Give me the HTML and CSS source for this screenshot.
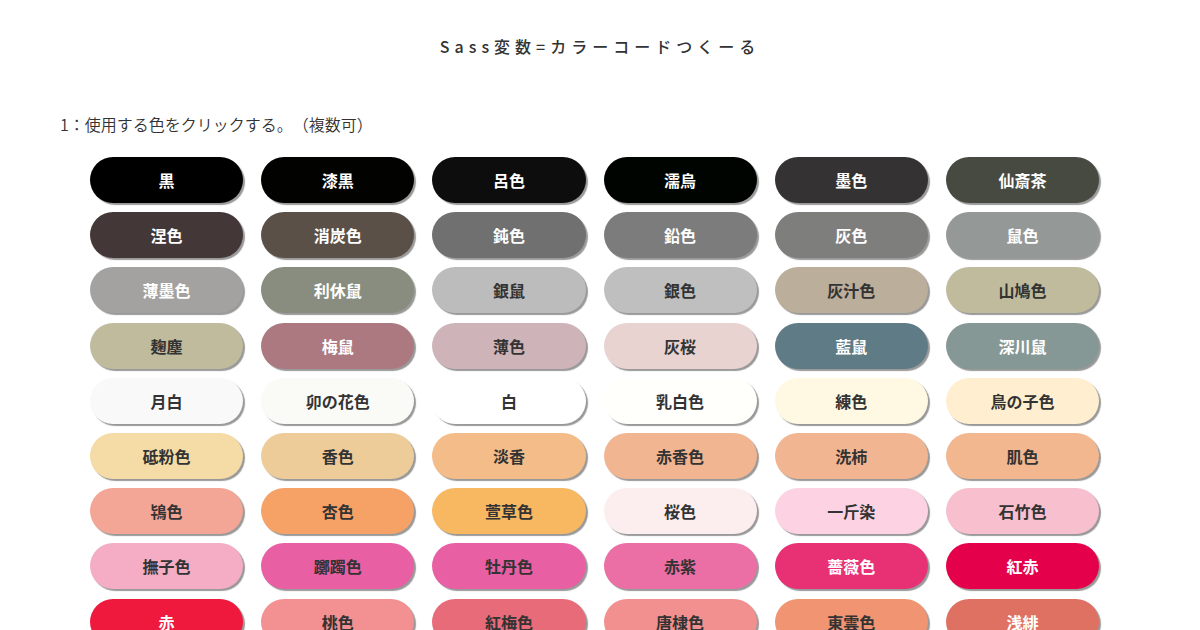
FILE: index.html
```
<!DOCTYPE html>
<html lang="ja">
<head>
<meta charset="utf-8">
<meta name="viewport" content="width=device-width, initial-scale=1">
<title>Sass変数=カラーコードつくーる</title>
<link rel="stylesheet" href="styles.css">
</head>
<body>
<header class="header"><h1 class="title">Sass変数=カラーコードつくーる</h1></header>
<main class="main">
<p class="step">1：使用する色をクリックする。（複数可）</p>
<ul class="colors">
<li><button type="button" class="color light" style="background-color:#000000">黒</button></li>
<li><button type="button" class="color light" style="background-color:#020200">漆黒</button></li>
<li><button type="button" class="color light" style="background-color:#0d0d0d">呂色</button></li>
<li><button type="button" class="color light" style="background-color:#000400">濡烏</button></li>
<li><button type="button" class="color light" style="background-color:#343232">墨色</button></li>
<li><button type="button" class="color light" style="background-color:#474a40">仙斎茶</button></li>
<li><button type="button" class="color light" style="background-color:#433737">涅色</button></li>
<li><button type="button" class="color light" style="background-color:#5a5047">消炭色</button></li>
<li><button type="button" class="color light" style="background-color:#707070">鈍色</button></li>
<li><button type="button" class="color light" style="background-color:#7c7c7c">鉛色</button></li>
<li><button type="button" class="color light" style="background-color:#7e7e7d">灰色</button></li>
<li><button type="button" class="color light" style="background-color:#949897">鼠色</button></li>
<li><button type="button" class="color light" style="background-color:#a3a2a1">薄墨色</button></li>
<li><button type="button" class="color light" style="background-color:#888d7f">利休鼠</button></li>
<li><button type="button" class="color" style="background-color:#bcbcbc">銀鼠</button></li>
<li><button type="button" class="color" style="background-color:#bfbfbf">銀色</button></li>
<li><button type="button" class="color" style="background-color:#bbae9b">灰汁色</button></li>
<li><button type="button" class="color" style="background-color:#bfbb9c">山鳩色</button></li>
<li><button type="button" class="color" style="background-color:#bfbb9c">麹塵</button></li>
<li><button type="button" class="color light" style="background-color:#ad7981">梅鼠</button></li>
<li><button type="button" class="color" style="background-color:#ceb4b9">薄色</button></li>
<li><button type="button" class="color" style="background-color:#e8d3d1">灰桜</button></li>
<li><button type="button" class="color light" style="background-color:#5f7b85">藍鼠</button></li>
<li><button type="button" class="color light" style="background-color:#869896">深川鼠</button></li>
<li><button type="button" class="color" style="background-color:#f9f9f9">月白</button></li>
<li><button type="button" class="color" style="background-color:#fafaf6">卯の花色</button></li>
<li><button type="button" class="color" style="background-color:#ffffff">白</button></li>
<li><button type="button" class="color" style="background-color:#fffffc">乳白色</button></li>
<li><button type="button" class="color" style="background-color:#fff9e3">練色</button></li>
<li><button type="button" class="color" style="background-color:#ffefd0">鳥の子色</button></li>
<li><button type="button" class="color" style="background-color:#f5dca6">砥粉色</button></li>
<li><button type="button" class="color" style="background-color:#eecc9a">香色</button></li>
<li><button type="button" class="color" style="background-color:#f3bc88">淡香</button></li>
<li><button type="button" class="color" style="background-color:#f2b592">赤香色</button></li>
<li><button type="button" class="color" style="background-color:#f2b591">洗柿</button></li>
<li><button type="button" class="color" style="background-color:#f2b78f">肌色</button></li>
<li><button type="button" class="color" style="background-color:#f3a696">鴇色</button></li>
<li><button type="button" class="color" style="background-color:#f6a266">杏色</button></li>
<li><button type="button" class="color" style="background-color:#f8b862">萱草色</button></li>
<li><button type="button" class="color" style="background-color:#fceeee">桜色</button></li>
<li><button type="button" class="color" style="background-color:#fdd3e3">一斤染</button></li>
<li><button type="button" class="color" style="background-color:#f8bfce">石竹色</button></li>
<li><button type="button" class="color" style="background-color:#f5adc6">撫子色</button></li>
<li><button type="button" class="color" style="background-color:#e95fa4">躑躅色</button></li>
<li><button type="button" class="color" style="background-color:#e95fa4">牡丹色</button></li>
<li><button type="button" class="color" style="background-color:#eb6ea5">赤紫</button></li>
<li><button type="button" class="color light" style="background-color:#e83075">薔薇色</button></li>
<li><button type="button" class="color light" style="background-color:#e5004b">紅赤</button></li>
<li><button type="button" class="color light" style="background-color:#ef193d">赤</button></li>
<li><button type="button" class="color" style="background-color:#f29092">桃色</button></li>
<li><button type="button" class="color" style="background-color:#e86b79">紅梅色</button></li>
<li><button type="button" class="color" style="background-color:#f29090">唐棣色</button></li>
<li><button type="button" class="color" style="background-color:#f19472">東雲色</button></li>
<li><button type="button" class="color light" style="background-color:#df7163">浅緋</button></li>
</ul>
</main>
</body>
</html>
```
FILE: styles.css
```
body {
  margin: 0;
  background: #fff;
  color: #333;
  font: 16px/24px "Noto Sans CJK JP", sans-serif;
  text-spacing-trim: space-all;
}

.header {
  padding: 34px 60px 0;
}

.title {
  margin: 0;
  font-size: 16px;
  font-weight: 500;
  letter-spacing: 5px;
  text-align: center;
}

.main {
  padding: 54px 60px 0;
}

.step {
  margin: 0 0 21px;
  font-weight: 350;
}

.colors {
  display: grid;
  grid-template-columns: repeat(6, 1fr);
  column-gap: 18px;
  margin: 0 41px 0 30px;
  padding: 0;
  list-style: none;
}

.colors li {
  margin-bottom: 6%;
}

.color {
  display: block;
  width: 100%;
  padding: 11px 0;
  border: 0;
  border-radius: 24px;
  box-shadow: 2px 2px 1px 0 #999;
  color: #333;
  font: inherit;
  font-weight: 700;
  cursor: pointer;
}

.light {
  color: #fff;
}
```
